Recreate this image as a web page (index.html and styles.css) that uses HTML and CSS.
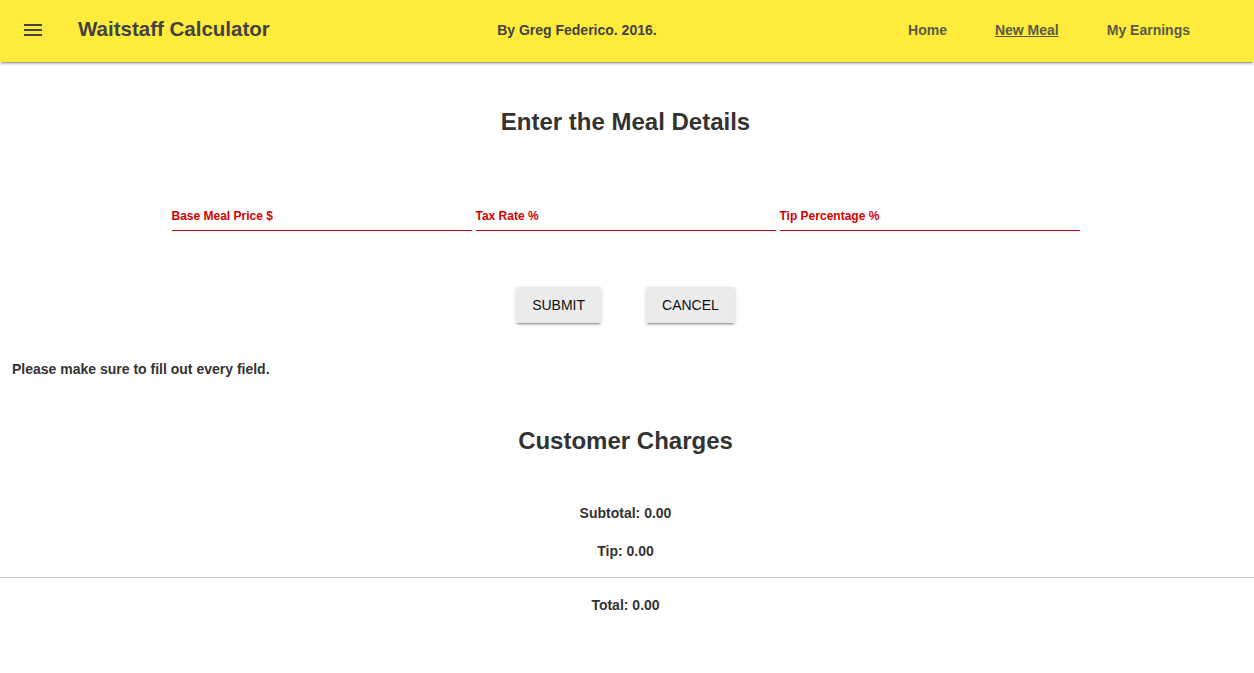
FILE: index.html
```html
<!DOCTYPE html>
<html lang="en">
<head>
<meta charset="utf-8">
<title>Waitstaff Calculator</title>
<link rel="stylesheet" href="styles.css">
</head>
<body>
<header class="topbar">
  <button class="menu-btn" aria-label="Menu">
    <svg width="18" height="12" viewBox="0 0 18 12"><rect x="0" y="0" width="18" height="2" fill="#424242"/><rect x="0" y="5" width="18" height="2" fill="#424242"/><rect x="0" y="10" width="18" height="2" fill="#424242"/></svg>
  </button>
  <span class="app-title">Waitstaff Calculator</span>
  <span class="spacer"></span>
  <span class="byline">By Greg Federico. 2016.</span>
  <span class="spacer"></span>
  <nav class="nav">
    <a class="nav-link" href="#">Home</a>
    <a class="nav-link active" href="#">New Meal</a>
    <a class="nav-link" href="#">My Earnings</a>
  </nav>
</header>

<main class="content">
  <h2 class="section-title first">Enter the Meal Details</h2>

  <form class="fields">
    <label class="field"><span class="field-label">Base Meal Price $</span><span class="field-input"></span></label>
    <label class="field"><span class="field-label">Tax Rate %</span><span class="field-input"></span></label>
    <label class="field"><span class="field-label">Tip Percentage %</span><span class="field-input"></span></label>
  </form>

  <div class="actions">
    <button class="btn" type="button">SUBMIT</button>
    <button class="btn" type="button">CANCEL</button>
  </div>

  <p class="warning">Please make sure to fill out every field.</p>

  <h2 class="section-title second">Customer Charges</h2>

  <p class="line subtotal">Subtotal: 0.00</p>
  <p class="line tip">Tip: 0.00</p>
  <hr class="divider">
  <p class="line total">Total: 0.00</p>
</main>
</body>
</html>
```

FILE: styles.css
```css
* { box-sizing: border-box; }

body {
  margin: 0;
  font-family: "Liberation Sans", Arial, Helvetica, sans-serif;
  color: #333333;
  background: #ffffff;
}

.topbar {
  height: 62px;
  background: #ffeb3b;
  display: flex;
  align-items: center;
  padding: 0 40px 0 24px;
  box-shadow: 0 2px 2px 0 rgba(0,0,0,.14), 0 3px 1px -2px rgba(0,0,0,.2), 0 1px 5px 0 rgba(0,0,0,.12);
  position: relative;
  z-index: 1;
}

.menu-btn {
  border: none;
  background: none;
  padding: 0;
  width: 18px;
  height: 12px;
  display: flex;
  margin-top: -2px;
}

.app-title {
  margin-left: 36px;
  font-size: 20.5px;
  font-weight: bold;
  color: #424242;
  margin-top: -4px;
}

.spacer { flex: 1; }

.byline {
  font-size: 14px;
  font-weight: bold;
  color: #424242;
  margin-top: -2px;
}

.nav { display: flex; margin-top: -2px; }

.nav-link {
  padding: 0 24px;
  font-size: 14px;
  font-weight: bold;
  color: #5a5a48;
  text-decoration: none;
}

.nav-link.active { text-decoration: underline; }

.content { padding: 0; }

.section-title {
  margin: 0;
  padding-right: 3px;
  text-align: center;
  font-size: 24px;
  line-height: 28px;
  font-weight: bold;
  color: #333333;
}

.section-title.first { margin-top: 46px; }
.section-title.second { margin-top: 50px; }

.fields {
  display: flex;
  justify-content: center;
  gap: 4px;
  margin: 72px 0 0;
  padding-right: 3px;
}

.field {
  width: 300px;
  display: flex;
  flex-direction: column;
}

.field-label {
  font-size: 12px;
  line-height: 16px;
  font-weight: bold;
  color: #d50000;
}

.field-input {
  height: 7px;
  border-bottom: 1px solid #d50000;
}

.actions {
  display: flex;
  justify-content: center;
  gap: 45px;
  margin-top: 56px;
  padding-right: 3px;
}

.btn {
  height: 36px;
  padding: 0 16px;
  border: none;
  border-radius: 2px;
  background: #ebebeb;
  color: #111111;
  font-family: "Liberation Sans", Arial, Helvetica, sans-serif;
  font-size: 14px;
  box-shadow: 0 2px 2px 0 rgba(0,0,0,.14), 0 3px 1px -2px rgba(0,0,0,.2), 0 1px 5px 0 rgba(0,0,0,.12);
}

.warning {
  margin: 38px 0 0;
  padding-left: 12px;
  font-size: 14px;
  line-height: 16px;
  font-weight: bold;
  color: #333333;
}

.line {
  margin: 0;
  padding-right: 3px;
  text-align: center;
  font-size: 14px;
  line-height: 16px;
  font-weight: bold;
  color: #333333;
}

.subtotal { margin-top: 50px; }
.tip { margin-top: 22px; }

.divider {
  margin: 18px 0 0;
  border: none;
  border-top: 1px solid #cccccc;
}

.total { margin-top: 19px; }
```
